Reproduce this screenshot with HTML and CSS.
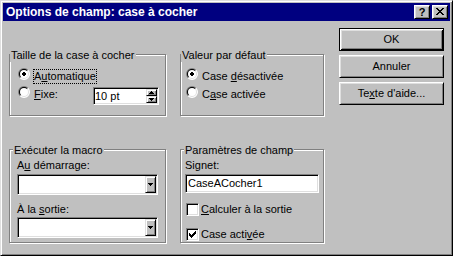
FILE: index.html
```html
<!DOCTYPE html>
<html lang="fr">
<head>
<meta charset="utf-8">
<title>Options de champ: case à cocher</title>
<link rel="stylesheet" href="styles.css">
</head>
<body>
<div class="window">
  <div class="titlebar">
    <span class="title">Options de champ: case à cocher</span>
    <div class="tb-buttons">
      <span class="tb-btn tb-help">?</span>
      <span class="tb-btn tb-close"><svg width="8" height="7" viewBox="0 0 8 7" shape-rendering="crispEdges"><path fill="#000" d="M0 0h2v1h-2zM6 0h2v1h-2zM1 1h2v1h-2zM5 1h2v1h-2zM2 2h4v1h-4zM3 3h2v1h-2zM2 4h4v1h-4zM1 5h2v1h-2zM5 5h2v1h-2zM0 6h2v1h-2zM6 6h2v1h-2z"/></svg></span>
    </div>
  </div>

  <div class="content">
    <div class="groups">
      <div class="group g-size">
        <span class="legend">Taille de la case à cocher</span>
        <div class="row">
          <svg class="radio" width="12" height="12" viewBox="0 0 12 12"><path fill="#808080" d="M1.757 10.243A6 6 0 0 1 10.243 1.757Z"/><path fill="#fff" d="M10.243 1.757A6 6 0 0 1 1.757 10.243Z"/><path fill="#000" d="M2.464 9.536A5 5 0 0 1 9.536 2.464Z"/><path fill="#dfdfdf" d="M9.536 2.464A5 5 0 0 1 2.464 9.536Z"/><circle cx="6" cy="6" r="4" fill="#fff"/><path fill="#000" shape-rendering="crispEdges" d="M5 4h2v1h1v2h-1v1h-2v-1h-1v-2h1z"/></svg>
          <span class="lbl focus">A<u>u</u>tomatique</span>
        </div>
        <div class="row">
          <svg class="radio" width="12" height="12" viewBox="0 0 12 12"><path fill="#808080" d="M1.757 10.243A6 6 0 0 1 10.243 1.757Z"/><path fill="#fff" d="M10.243 1.757A6 6 0 0 1 1.757 10.243Z"/><path fill="#000" d="M2.464 9.536A5 5 0 0 1 9.536 2.464Z"/><path fill="#dfdfdf" d="M9.536 2.464A5 5 0 0 1 2.464 9.536Z"/><circle cx="6" cy="6" r="4" fill="#fff"/></svg>
          <span class="lbl"><u>F</u>ixe:</span>
          <div class="spin field">
            <span class="spin-val">10 pt</span>
            <span class="spin-btns">
              <span class="sbtn"><svg width="5" height="3" viewBox="0 0 5 3" shape-rendering="crispEdges"><path fill="#000" d="M2 0H3V1H4V2H5V3H0V2H1V1H2Z"/></svg></span>
              <span class="sbtn"><svg width="5" height="3" viewBox="0 0 5 3" shape-rendering="crispEdges"><path fill="#000" d="M0 0H5V1H4V2H3V3H2V2H1V1H0Z"/></svg></span>
            </span>
          </div>
        </div>
      </div>

      <div class="group g-default">
        <span class="legend">Valeur par défaut</span>
        <div class="row">
          <svg class="radio" width="12" height="12" viewBox="0 0 12 12"><path fill="#808080" d="M1.757 10.243A6 6 0 0 1 10.243 1.757Z"/><path fill="#fff" d="M10.243 1.757A6 6 0 0 1 1.757 10.243Z"/><path fill="#000" d="M2.464 9.536A5 5 0 0 1 9.536 2.464Z"/><path fill="#dfdfdf" d="M9.536 2.464A5 5 0 0 1 2.464 9.536Z"/><circle cx="6" cy="6" r="4" fill="#fff"/><path fill="#000" shape-rendering="crispEdges" d="M5 4h2v1h1v2h-1v1h-2v-1h-1v-2h1z"/></svg>
          <span class="lbl">Case <u>d</u>ésactivée</span>
        </div>
        <div class="row">
          <svg class="radio" width="12" height="12" viewBox="0 0 12 12"><path fill="#808080" d="M1.757 10.243A6 6 0 0 1 10.243 1.757Z"/><path fill="#fff" d="M10.243 1.757A6 6 0 0 1 1.757 10.243Z"/><path fill="#000" d="M2.464 9.536A5 5 0 0 1 9.536 2.464Z"/><path fill="#dfdfdf" d="M9.536 2.464A5 5 0 0 1 2.464 9.536Z"/><circle cx="6" cy="6" r="4" fill="#fff"/></svg>
          <span class="lbl">C<u>a</u>se activée</span>
        </div>
      </div>

      <div class="group g-macro">
        <span class="legend legend-in">Exécuter la macro</span>
        <div class="flabel">A<u>u</u> démarrage:</div>
        <div class="combo field"><span class="dd"><svg width="5" height="3" viewBox="0 0 5 3" shape-rendering="crispEdges"><path fill="#000" d="M0 0H5V1H4V2H3V3H2V2H1V1H0Z"/></svg></span></div>
        <div class="flabel second">À la <u>s</u>ortie:</div>
        <div class="combo field second"><span class="dd"><svg width="5" height="3" viewBox="0 0 5 3" shape-rendering="crispEdges"><path fill="#000" d="M0 0H5V1H4V2H3V3H2V2H1V1H0Z"/></svg></span></div>
      </div>

      <div class="group g-field">
        <span class="legend legend-in">Paramètres de champ</span>
        <div class="flabel">Signet:</div>
        <div class="edit field">CaseACocher1</div>
        <div class="check-row">
          <span class="checkbox field"></span>
          <span class="lbl"><u>C</u>alculer à la sortie</span>
        </div>
        <div class="check-row second">
          <span class="checkbox field"><svg width="7" height="7" viewBox="0 0 7 7" shape-rendering="crispEdges"><path fill="#000" d="M6 0h1v1h-1zM5 1h2v1h-2zM0 2h1v1h-1zM4 2h3v1h-3zM0 3h2v1h-2zM3 3h3v1h-3zM0 4h5v1h-5zM1 5h3v1h-3zM2 6h1v1h-1z"/></svg></span>
          <span class="lbl">Case acti<u>v</u>ée</span>
        </div>
      </div>
    </div>

    <div class="buttons">
      <div class="btn default">OK</div>
      <div class="btn">Annuler</div>
      <div class="btn">Te<u>x</u>te d'aide...</div>
    </div>
  </div>
</div>
</body>
</html>
```

FILE: styles.css
```css
* { box-sizing: border-box; }
html, body { margin: 0; padding: 0; }
body {
  font-family: "Liberation Sans", Arial, sans-serif;
  font-size: 11px;
  line-height: 13px;
  color: #000;
  background: #c0c0c0;
  overflow: hidden;
}
.window {
  width: 453px;
  height: 256px;
  border: 1px solid;
  border-color: #dfdfdf #000 #000 #dfdfdf;
  box-shadow: inset 1px 1px #fff, inset -1px -1px #808080;
  padding: 2px;
  background: #c0c0c0;
}
.titlebar {
  height: 18px;
  background: #000080;
  color: #fff;
  display: flex;
  align-items: center;
  padding: 0 2px 0 3px;
}
.title {
  flex: 1;
  font-weight: bold;
  font-size: 12px;
  line-height: 18px;
  white-space: nowrap;
}
.tb-buttons { display: flex; gap: 2px; }
.tb-btn {
  width: 16px;
  height: 14px;
  background: #c0c0c0;
  color: #000;
  border: 1px solid;
  border-color: #fff #000 #000 #fff;
  box-shadow: inset 1px 1px #dfdfdf, inset -1px -1px #808080;
}
.tb-help {
  display: flex;
  justify-content: center;
  font-weight: bold;
  font-size: 11px;
  line-height: 12px;
}
.tb-close svg { display: block; margin: 2px 0 0 3px; }

.content {
  display: flex;
  align-items: flex-start;
  padding: 7px 0 0 6px;
}
.groups {
  display: grid;
  grid-template-columns: 157px 144px;
  grid-template-rows: 62px 94px;
  column-gap: 14px;
  row-gap: 33px;
  margin-top: 26px;
}
.group {
  position: relative;
  border: 1px solid #808080;
  box-shadow: inset 1px 1px #fff, 1px 1px #fff;
}
.legend {
  position: absolute;
  top: -6px;
  left: 0;
  padding: 0 1px;
  background: #c0c0c0;
  white-space: nowrap;
}
.legend-in { left: 3px; }

.field {
  background: #fff;
  border: 1px solid;
  border-color: #808080 #fff #fff #808080;
  box-shadow: inset 1px 1px #000, inset -1px -1px #dfdfdf;
  padding: 1px;
}
.raised {
  border: 1px solid;
}

.g-size { padding: 13px 6px 0 8px; }
.g-default { padding: 13px 6px 0 5px; }
.row { display: flex; align-items: flex-start; }
.row + .row { margin-top: 2px; }
.radio { flex: none; display: block; }
.lbl {
  border: 1px solid transparent;
  margin: 1px 0 0 3px;
  white-space: nowrap;
}
.lbl.focus { border: 1px dotted #000; }

.spin {
  margin: 1px 0 0 auto;
  width: 66px;
  height: 18px;
  display: flex;
}
.spin-val { flex: 1; line-height: 14px; }
.spin-btns { display: flex; flex-direction: column; width: 11px; }
.sbtn, .dd {
  background: #c0c0c0;
  border: 1px solid;
  border-color: #dfdfdf #000 #000 #dfdfdf;
  box-shadow: inset 1px 1px #fff, inset -1px -1px #808080;
  display: flex;
  align-items: center;
  justify-content: center;
}
.sbtn { height: 7px; }
.sbtn svg, .dd svg { display: block; }

.g-macro { padding: 9px 7px 0 7px; }
.g-field { padding: 9px 4px 0 4px; }
.flabel { white-space: nowrap; }
.flabel.second { margin-top: 8px; }
.combo {
  margin-top: 2px;
  height: 21px;
  display: flex;
  justify-content: flex-end;
}
.combo.second { margin-top: 1px; }
.dd { width: 11px; height: 17px; }

.edit {
  margin-top: 2px;
  height: 19px;
  padding-left: 2px;
  line-height: 15px;
  white-space: nowrap;
}
.check-row {
  display: flex;
  align-items: center;
  height: 15px;
  margin-top: 9px;
}
.check-row.second { margin-top: 10px; }
.checkbox {
  flex: none;
  width: 13px;
  height: 13px;
  margin-left: 1px;
  display: flex;
  align-items: center;
  justify-content: center;
}
.checkbox svg { display: block; }
.check-row .lbl { margin: 0 0 0 1px; }

.buttons {
  margin-left: 15px;
  width: 105px;
  display: flex;
  flex-direction: column;
  gap: 4px;
}
.btn {
  height: 23px;
  background: #c0c0c0;
  border: 1px solid;
  border-color: #fff #000 #000 #fff;
  box-shadow: inset 1px 1px #dfdfdf, inset -1px -1px #808080;
  display: flex;
  align-items: center;
  justify-content: center;
  white-space: nowrap;
}
.btn.default {
  border-color: #000;
  box-shadow: inset 1px 1px #fff, inset -1px -1px #000, inset 2px 2px #dfdfdf, inset -2px -2px #808080;
}
```
